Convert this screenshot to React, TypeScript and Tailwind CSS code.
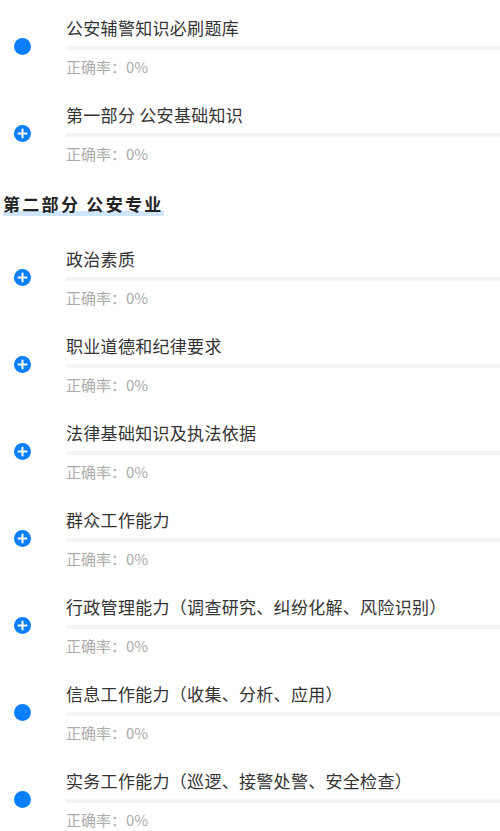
import React from 'react';

type Item = { title: string; icon: 'dot' | 'plus' };

const top: Item[] = [
  { title: '公安辅警知识必刷题库', icon: 'dot' },
  { title: '第一部分 公安基础知识', icon: 'plus' },
];

const second: Item[] = [
  { title: '政治素质', icon: 'plus' },
  { title: '职业道德和纪律要求', icon: 'plus' },
  { title: '法律基础知识及执法依据', icon: 'plus' },
  { title: '群众工作能力', icon: 'plus' },
  { title: '行政管理能力（调查研究、纠纷化解、风险识别）', icon: 'plus' },
  { title: '信息工作能力（收集、分析、应用）', icon: 'dot' },
  { title: '实务工作能力（巡逻、接警处警、安全检查）', icon: 'dot' },
];

function Icon({ type }: { type: Item['icon'] }) {
  if (type === 'dot') {
    return <div className="w-[17px] h-[17px] rounded-full bg-[#0a7ffb]" />;
  }
  return (
    <svg width="17" height="17" viewBox="0 0 17 17">
      <circle cx="8.5" cy="8.5" r="8.5" fill="#0a7ffb" />
      <path d="M8.5 4.5v8M4.5 8.5h8" stroke="#fff" strokeWidth="2" strokeLinecap="round" />
    </svg>
  );
}

function Row({ item }: { item: Item }) {
  return (
    <div className="flex h-[87px]">
      <div className="w-[66px] shrink-0 flex pt-[22px] pl-[14px]">
        <Icon type={item.icon} />
      </div>
      <div className="flex-1 min-w-0">
        <div className="h-[24px] leading-[24px] text-[17px] tracking-[0.3px] text-[#333] whitespace-nowrap">
          {item.title}
        </div>
        <div className="mt-[6px] h-[4px] bg-[#f4f4f4]" />
        <div className="mt-[7px] h-[20px] leading-[20px] text-[15px] text-[#ababab]">正确率：0%</div>
      </div>
    </div>
  );
}

export default function App() {
  return (
    <div
      className="w-[500px] h-[831px] overflow-hidden bg-white pt-[16px]"
      style={{ fontFamily: '"Noto Sans CJK SC", "Noto Sans", sans-serif' }}
    >
      {top.map((it) => (
        <Row key={it.title} item={it} />
      ))}
      <div className="pl-[3px] pt-[2px] h-[57px]">
        <span className="inline-block text-[17px] leading-[24px] font-bold tracking-[2.3px] text-[#222] bg-[linear-gradient(transparent_78%,#cfe5fb_78%)]">
          第二部分 公安专业
        </span>
      </div>
      {second.map((it) => (
        <Row key={it.title} item={it} />
      ))}
    </div>
  );
}
